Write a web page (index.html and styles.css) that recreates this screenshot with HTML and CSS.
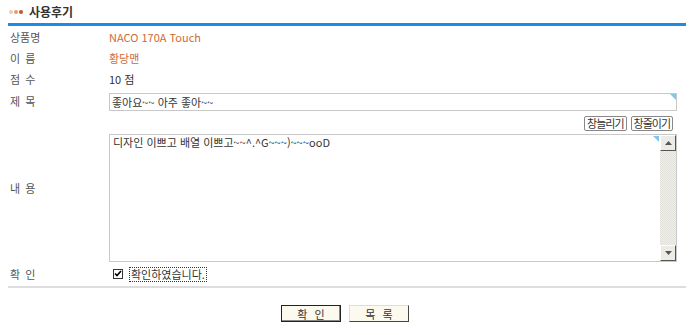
FILE: index.html
```html
<!DOCTYPE html>
<html lang="ko">

<head>
    <meta charset="UTF-8">
    <title>사용후기</title>
    <link rel="stylesheet" href="styles.css">
</head>

<body>
    <div class="review">
        <div class="review-head">
            <span class="dots"><i class="dot dot-1"></i><i class="dot dot-2"></i><i class="dot dot-3"></i></span>
            <span class="review-title">사용후기</span>
        </div>

        <div class="form-grid">
            <div class="label">상품명</div>
            <div class="value accent">NACO 170A Touch</div>

            <div class="label">이 름</div>
            <div class="value accent">황당맨</div>

            <div class="label">점 수</div>
            <div class="value">10 점</div>

            <div class="label">제 목</div>
            <div class="value subject">
                <div class="field">
                    <input class="text-input" type="text" value="좋아요~~ 아주 좋아~~" spellcheck="false">
                    <span class="corner"></span>
                </div>
            </div>

            <div class="label label-tall">내 용</div>
            <div class="value size-buttons">
                <button class="small-btn" type="button">창늘리기</button>
                <button class="small-btn" type="button">창줄이기</button>
            </div>
            <div class="value">
                <div class="field area-box">
                    <div class="text-area">디자인 이쁘고 배열 이쁘고~~^.^G~~~)~~~ooD</div>
                    <div class="scrollbar">
                        <span class="scroll-btn">
                            <svg viewBox="0 0 7 4" width="7" height="4"><path d="M3.5 0L7 4H0z" fill="#555" /></svg>
                        </span>
                        <span class="scroll-track"></span>
                        <span class="scroll-btn">
                            <svg viewBox="0 0 7 4" width="7" height="4"><path d="M0 0H7L3.5 4z" fill="#555" /></svg>
                        </span>
                    </div>
                    <span class="corner"></span>
                </div>
            </div>

            <div class="label">확 인</div>
            <div class="value">
                <label class="agree">
                    <span class="check">
                        <svg viewBox="0 0 8 8" width="8" height="8"><path d="M1 3.5l2 2 4-4.5" fill="none" stroke="#000" stroke-width="1.6" /></svg>
                    </span>
                    <span class="agree-text">확인하였습니다.</span>
                </label>
            </div>
        </div>

        <div class="actions">
            <button class="action-btn primary" type="button">확 인</button>
            <button class="action-btn" type="button">목 록</button>
        </div>
    </div>
</body>

</html>
```

FILE: styles.css
```css
body {
    margin: 0;
    background: #fff;
    font-family: "Noto Sans CJK KR", "Liberation Sans", sans-serif;
    font-size: 11px;
    color: #555;
}

.review {
    width: 678px;
    margin-left: 8px;
}

.review-head {
    display: flex;
    align-items: center;
    gap: 6px;
    height: 23px;
    border-bottom: 3px solid #1f8ae6;
    padding-left: 1px;
}

.dots {
    display: flex;
    gap: 1px;
}

.dot {
    width: 4px;
    height: 4px;
    border-radius: 50%;
}

.dot-1 {
    background: #f6c8aa;
}

.dot-2 {
    background: #eb9a66;
}

.dot-3 {
    background: #c4572a;
}

.review-title {
    font-weight: bold;
    font-size: 12px;
    color: #333;
}

.form-grid {
    display: grid;
    grid-template-columns: 101px 1fr;
    grid-template-rows: 21px 21px 21px 24px 20px 130px 22px;
    padding-bottom: 1px;
    padding-right: 9px;
    border-bottom: 2px solid #ddd;
}

.label {
    display: flex;
    align-items: center;
    padding-left: 2px;
    color: #555;
    word-spacing: 2px;
}

.label-tall {
    grid-row: span 2;
}

.value {
    display: flex;
    align-items: center;
    color: #333;
}

.subject {
    padding-top: 2px;
}

.accent {
    color: #cf6a35;
}

.field {
    position: relative;
    flex: 1;
}

.text-input {
    box-sizing: border-box;
    width: 100%;
    height: 18px;
    margin: 0;
    padding: 0 2px;
    border: 1px solid #c9c9c9;
    font: inherit;
    color: #333;
    outline: none;
}

.corner {
    position: absolute;
    top: 1px;
    right: 1px;
    width: 0;
    height: 0;
    border-top: 6px solid #7ec8ee;
    border-left: 6px solid transparent;
}

.area-box {
    display: flex;
    align-self: stretch;
    margin: 1px 0;
    border: 1px solid #c9c9c9;
}

.area-box .corner {
    right: 17px;
}

.text-area {
    flex: 1;
    padding: 0 3px;
    line-height: 14px;
    color: #333;
}

.scrollbar {
    display: flex;
    flex-direction: column;
    width: 16px;
    background: #eeede8;
}

.scroll-btn {
    display: flex;
    align-items: center;
    justify-content: center;
    box-sizing: border-box;
    height: 16px;
    background: #ecebe6;
    border: 1px solid;
    border-color: #fff #555 #555 #fff;
}

.scroll-track {
    flex: 1;
    background-color: #efeeea;
    background-image: linear-gradient(45deg, #e2e1dc 25%, transparent 25%, transparent 75%, #e2e1dc 75%),
        linear-gradient(45deg, #e2e1dc 25%, transparent 25%, transparent 75%, #e2e1dc 75%);
    background-size: 2px 2px;
    background-position: 0 0, 1px 1px;
}

.size-buttons {
    justify-content: flex-end;
    gap: 4px;
    padding-right: 4px;
}

.small-btn {
    height: 15px;
    margin: 0;
    padding: 0 2px;
    background: #fff;
    border: 1px solid #888;
    border-radius: 2px;
    font: inherit;
    font-size: 11px;
    line-height: 11px;
    letter-spacing: -1px;
    color: #333;
}

.agree {
    display: flex;
    align-items: center;
    gap: 6px;
    padding-left: 4px;
}

.check {
    display: flex;
    align-items: center;
    justify-content: center;
    box-sizing: border-box;
    width: 10px;
    height: 10px;
    border: 1px solid #333;
    background: #fff;
}

.agree-text {
    padding: 0 1px;
    border: 1px dotted #333;
    color: #333;
    line-height: 13px;
}

.actions {
    display: flex;
    justify-content: center;
    gap: 8px;
    padding-top: 17px;
    padding-right: 4px;
}

.action-btn {
    width: 60px;
    height: 17px;
    margin: 0;
    padding: 0;
    background: #fcf9ee;
    border: 1px solid;
    border-color: #ddd #444 #444 #ddd;
    font: inherit;
    font-size: 11px;
    word-spacing: 4px;
    color: #333;
}

.action-btn.primary {
    border-color: #222;
    box-shadow: inset -1px -1px #888;
}
```
